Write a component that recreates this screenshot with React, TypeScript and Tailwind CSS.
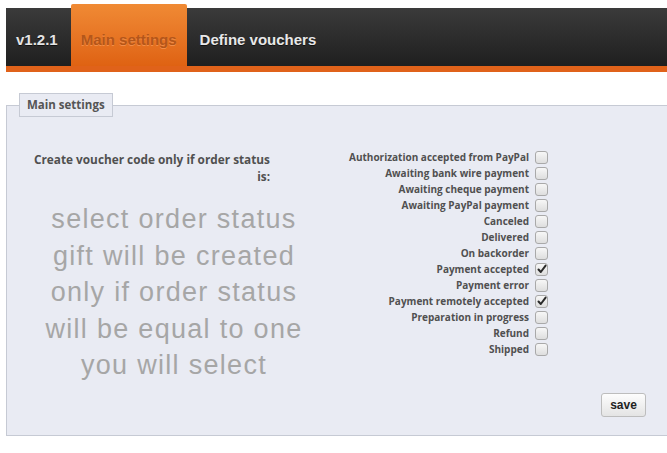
import React from "react";

const statuses: { label: string; checked: boolean }[] = [
  { label: "Authorization accepted from PayPal", checked: false },
  { label: "Awaiting bank wire payment", checked: false },
  { label: "Awaiting cheque payment", checked: false },
  { label: "Awaiting PayPal payment", checked: false },
  { label: "Canceled", checked: false },
  { label: "Delivered", checked: false },
  { label: "On backorder", checked: false },
  { label: "Payment accepted", checked: true },
  { label: "Payment error", checked: false },
  { label: "Payment remotely accepted", checked: true },
  { label: "Preparation in progress", checked: false },
  { label: "Refund", checked: false },
  { label: "Shipped", checked: false },
];

function Box({ checked }: { checked: boolean }) {
  return (
    <div className="relative h-[13px] w-[13px] shrink-0 rounded-[3px] border border-[#a9a9a9] bg-gradient-to-b from-[#f7f7f7] to-[#dedede]">
      {checked && (
        <svg
          className="absolute left-[1px] top-[0px]"
          width="10"
          height="10"
          viewBox="0 0 10 10"
        >
          <path
            d="M1.5 5.5 L3.8 8 L8.6 1.6"
            fill="none"
            stroke="#2a2a2a"
            strokeWidth="2"
            strokeLinecap="round"
            strokeLinejoin="round"
          />
        </svg>
      )}
    </div>
  );
}

export default function App() {
  return (
    <div className="w-[667px] h-[453px] overflow-hidden bg-white font-['Open_Sans',sans-serif]">
      {/* Header */}
      <div className="pt-[8px] pl-[6px]">
        <div className="flex h-[58px] w-[700px] bg-gradient-to-b from-[#3b3b3b] to-[#1f1f1f] font-['Liberation_Sans',Arial,sans-serif] text-[15px] font-bold leading-[17px]">
          <div className="pl-[10px] pr-[13px] pt-[23px] text-[#e4e4e4] [text-shadow:0_1px_0_rgba(0,0,0,0.6)]">
            v1.2.1
          </div>
          <div className="-mt-[4px] rounded-t-[2px] bg-gradient-to-b from-[#f08a34] to-[#df6212] px-[10px] pt-[27px] text-[#b4561a] [text-shadow:0_1px_0_rgba(255,170,110,0.55)]">
            Main settings
          </div>
          <div className="pl-[13px] pt-[23px] text-[#e8e8e8] [text-shadow:0_1px_0_rgba(0,0,0,0.6)]">
            Define vouchers
          </div>
        </div>
        <div className="h-[6px] w-[700px] bg-[#e0621a]" />
      </div>

      {/* Fieldset */}
      <fieldset className="ml-[6px] mt-[21px] w-[700px] border border-[#c6cad4] bg-[#e9ebf3] pb-[18px]">
        <legend className="ml-[12px] h-[24px] border border-[#c6cad4] bg-[#e9ebf3] px-[7px] text-[11.5px] font-bold leading-[22px] text-[#555]">
          Main settings
        </legend>

        <div className="flex pt-[32px]">
          <div className="w-[334px] shrink-0">
            <div className="mt-[2px] pr-[71px] text-right text-[11.8px] font-bold leading-[17px] text-[#505050]">
              Create voucher code only if order status
              <br />
              is:
            </div>
            <div className="mt-[16px] text-center font-['Liberation_Sans',Arial,sans-serif] text-[27px] leading-[36.5px] tracking-[1.3px] text-[#a6a6a6]">
              select order status
              <br />
              gift will be created
              <br />
              only if order status
              <br />
              will be equal to one
              <br />
              you will select
            </div>
          </div>
          <div className="flex w-[207px] shrink-0 flex-col">
            {statuses.map((s) => (
              <div
                key={s.label}
                className="flex h-[16px] items-center justify-end gap-[6px]"
              >
                <span className="whitespace-nowrap text-[10px] font-bold leading-[16px] text-[#505050]">
                  {s.label}
                </span>
                <Box checked={s.checked} />
              </div>
            ))}
          </div>
        </div>

        <div className="mt-[7px] pl-[594px]">
          <button className="h-[24px] w-[45px] rounded-[3px] border border-[#bdbdbd] bg-gradient-to-b from-[#fdfdfd] to-[#e4e4e4] font-['Liberation_Sans',Arial,sans-serif] text-[12px] font-bold text-[#222]">
            save
          </button>
        </div>
      </fieldset>
    </div>
  );
}
